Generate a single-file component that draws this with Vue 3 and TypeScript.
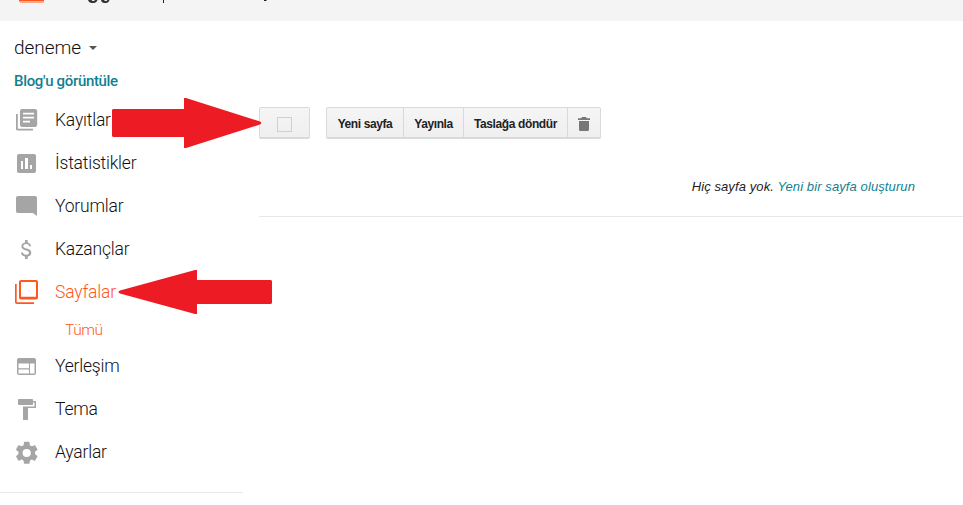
<script setup lang="ts">
interface NavItem {
  label: string
  key: string
  path: string
  active?: boolean
  child?: string
}

const items: NavItem[] = [
  {
    label: 'Kayıtlar',
    key: 'posts',
    path: 'M2.8 6H1v14.700c0 1.100.8 1.800 1.800 1.800H18v-1.700H2.800zM20.200 1H7.100C5.700 1 5 2 5 3.200v13.600C5 18 5.700 19 7.100 19h13.100c1.200 0 2-1 2-2.200V3.200C22.200 2 21.400 1 20.200 1zM19 6.500H8v-1.800h11zM15 14.500H8v-1.800h7zM19 10.500H8V8.700h11z',
  },
  {
    label: 'İstatistikler',
    key: 'stats',
    path: 'M19 3H4C2.800 3 2 3.800 2 5v15c0 1.200.8 2 2 2h15c1.200 0 2-.8 2-2V5c0-1.200-.8-2-2-2zM8 18H6v-8h2zM13 18h-3V7h3zM17 18h-2v-4h2z',
  },
  {
    label: 'Yorumlar',
    key: 'comments',
    path: 'M3 2h17c1.300 0 2 .8 2 2v18l-4-3H3c-1.300 0-2-.8-2-2V4c0-1.200.7-2 2-2z',
  },
  {
    label: 'Kazançlar',
    key: 'earnings',
    path: 'M11.500 11.500c-2.400-.6-3.200-1.300-3.200-2.400 0-1.200 1-2.100 2.900-2.100 2 0 2.700.9 2.800 2.300h2c-.1-1.800-1.200-3.400-3.400-3.900V3H10v2.400c-2.100.4-3.700 1.800-3.700 3.800 0 2.400 1.900 3.500 4.700 4.200 2.500.6 3 1.500 3 2.400 0 .7-.5 1.900-2.800 1.900-2.200 0-3-.9-3.100-2.200H6c.1 2.300 1.800 3.600 4 4V22h2.700v-2.500c2.100-.4 3.600-1.600 3.600-3.700 0-2.900-2.500-3.800-4.800-4.300z',
  },
  {
    label: 'Sayfalar',
    key: 'pages',
    active: true,
    child: 'Tümü',
    path: 'M1.700 4H0v18c0 1.200.8 2 2 2h17v-1.800H1.700zM21 0H6C4.800 0 4 .8 4 2v15.500c0 1.200.8 2 2 2h15c1.200 0 2-.8 2-2V2c0-1.200-.8-2-2-2zM21 16.800H6V2h15z',
  },
  {
    label: 'Yerleşim',
    key: 'layout',
    path: 'M19 4H4C2.800 4 2 4.800 2 6v13c0 1.200.8 2 2 2h15c1.200 0 2-.8 2-2V6c0-1.200-.8-2-2-2zM14 19.500H3.500v-4H14zM14 14.300H3.500V9.500H14zM19.500 19.500H15v-10h4.500z',
  },
  {
    label: 'Tema',
    key: 'theme',
    path: 'M18 4V3c0-.6-.4-1-1-1H4c-.6 0-1 .4-1 1v4c0 .6.4 1 1 1h13c.6 0 1-.4 1-1V5.500h1.500V9.500H8V22.500c0 .3.2.5.500.5h4c.3 0 .5-.2.500-.5V11h8V4z',
  },
  {
    label: 'Ayarlar',
    key: 'settings',
    path: 'M20 14.100c.1-.4.1-.8.1-1.100s0-.8-.1-1.200l2.300-1.800c.2-.2.300-.5.100-.7l-2.200-3.800c-.1-.3-.4-.3-.7-.3l-2.700 1.100c-.6-.4-1.200-.8-1.900-1.100L14.500 2.300c0-.3-.3-.5-.5-.5H9.500c-.3 0-.5.2-.5.500l-.4 2.900c-.7.3-1.300.7-1.900 1.100L4 5.200c-.3 0-.6 0-.7.3L1.100 9.300c-.1.200-.1.500.1.700l2.300 1.800c-.1.400-.1.800-.1 1.200s0 .7.100 1.100l-2.300 1.800c-.2.200-.2.500-.1.700l2.200 3.800c.1.300.4.300.7.300l2.700-1.100c.6.4 1.200.8 1.900 1.100l.4 2.600c0 .3.2.5.500.5H14c.3 0 .5-.2.500-.5l.4-2.600c.7-.3 1.300-.7 1.900-1.100l2.700 1.100c.3 0 .6 0 .7-.3l2.200-3.800c.1-.2.1-.5-.1-.7zM11.700 17.100a4.100 4.100 0 1 1 0-8.200 4.100 4.100 0 0 1 0 8.200z',
  },
]

const actions: string[] = ['Yeni sayfa', 'Yayınla', 'Taslağa döndür']
</script>

<template>
  <div class="page">
    <header class="topbar">
      <svg width="290" height="21" viewBox="0 0 290 21">
        <rect x="19" y="0" width="25" height="1.500" fill="#ff5722" />
        <rect x="20" y="1.500" width="24" height="1.500" fill="#ffab91" />
        <path d="M88 0h3.500l1 1h1.500l1-1h2.500q-1 3-4 3h-1.500q-3 0-4-3zM101 0h3l1 1h1.500l1-1h2q-1 3-3.500 3h-1.500q-3 0-3.500-3z" fill="#333" />
        <path d="M163 0h1v3h-1z" fill="#222" />
        <path d="M264 0h3l-1 1h-2z" fill="#222" />
      </svg>
    </header>
    <div class="body">
      <aside class="sidebar">
        <div class="blog"><span class="blog-name">deneme</span><i class="caret"></i></div>
        <a class="view">Blog'u görüntüle</a>
        <nav>
          <template v-for="item in items" :key="item.key">
            <a class="item" :class="{ active: item.active }">
              <svg class="icon" width="24" height="24" viewBox="0 0 24 24">
                <path :d="item.path" fill="currentColor" fill-rule="evenodd" />
              </svg>
              <span class="label">{{ item.label }}</span>
            </a>
            <a v-if="item.child" class="child">{{ item.child }}</a>
          </template>
        </nav>
      </aside>
      <main class="content">
        <div class="toolbar">
          <button class="btn check"><span class="box"></span></button>
          <div class="group">
            <button v-for="(a, i) in actions" :key="a" class="btn" :class="'b' + i">{{ a }}</button>
            <button class="btn trash">
              <svg width="12" height="14" viewBox="0 0 12 14"><path d="M0 1.200h3.200L4 0h4l.8 1.200H12V3H0zM1 4h10v8.500c0 .9-.6 1.500-1.500 1.500h-7C1.600 14 1 13.400 1 12.500z" fill="#777" /></svg>
            </button>
          </div>
        </div>
        <p class="empty">Hiç sayfa yok. <a>Yeni bir sayfa oluşturun</a></p>
      </main>
    </div>
    <svg class="arrow first" width="150" height="51" viewBox="0 0 150 51">
      <path d="M1 11H72V0H74L148 23.500Q150.500 25 148 26.500L74 50H72V39H1L0 38V12z" fill="#ed1c24" />
    </svg>
    <svg class="arrow second" width="154" height="44" viewBox="0 0 154 44">
      <path d="M153 10H79V0H77L2 20.500Q-1 22 2 23.500L77 44H79V34H153L154 33V11z" fill="#ed1c24" />
    </svg>
  </div>
</template>

<style>
body { background: #fff; overflow: hidden; }
</style>

<style scoped>
.page { position: relative; height: 505px; overflow: hidden; font-family: Roboto, sans-serif; color: #222; }
.topbar { height: 21px; background: #f4f4f4; }
.topbar svg { display: block; }
.body { display: flex; }
.sidebar { box-sizing: border-box; width: 243px; height: 472px; border-bottom: 1px solid #e8e8e8; padding-top: 14px; }
.blog { display: flex; align-items: center; height: 24px; padding-left: 14px; font-size: 19px; font-weight: 300; color: #111; }
.blog-name { width: 67px; letter-spacing: -0.05px; white-space: nowrap; }
.caret { margin: 2px 0 0 8px; border: 4px solid transparent; border-top-color: #555; border-bottom: 0; }
.view { display: block; margin: 12px 0 0 14px; height: 20px; font-size: 15px; font-weight: 500; line-height: 20px; color: #128091; white-space: nowrap; letter-spacing: -0.33px; }
nav { padding-top: 7px; }
.item { display: flex; align-items: center; height: 43px; color: #111; }
.icon { flex: none; margin-left: 15px; color: #a5a5a5; }
.label { margin-left: 16px; font-size: 17.5px; font-weight: 300; white-space: nowrap; letter-spacing: -0.2px; }
.active, .active .icon { color: #ff5722; }
.child { display: block; box-sizing: border-box; height: 31px; padding: 3px 0 0 65px; line-height: 28px; font-size: 15.5px; font-weight: 300; letter-spacing: -0.4px; color: #ff5722; }
.content { flex: 1; margin-left: 16px; }
.toolbar { display: flex; gap: 16px; padding-top: 86px; }
.btn { box-sizing: border-box; height: 32px; padding: 3px 0 0; margin: 0; border: 1px solid #d9d9d9; border-bottom-width: 2px; background: linear-gradient(#f5f5f5, #efefef); color: #222; font: bold 12px "Liberation Sans", Arial, sans-serif; letter-spacing: -0.4px; white-space: nowrap; display: flex; align-items: center; justify-content: center; }
.check { width: 51px; border-radius: 2px; }
.box { box-sizing: border-box; width: 15px; height: 15px; border: 1px solid #d0d0d0; }
.group { display: flex; }
.group .btn + .btn { border-left: 0; }
.b0 { width: 78px; border-radius: 2px 0 0 2px; }
.b1 { width: 60px; }
.b2 { width: 104px; letter-spacing: -0.38px; }
.group .trash { width: 33px; padding-top: 3px; border-radius: 0 2px 2px 0; }
.empty { box-sizing: border-box; height: 78px; margin: 0; padding: 39px 48px 0 0; border-bottom: 1px solid #e8e8e8; text-align: right; font: italic 13px/18px "Liberation Sans", Arial, sans-serif; letter-spacing: 0.1px; color: #222; }
.empty a { color: #128091; }
.arrow { position: absolute; }
.first { left: 112px; top: 98px; }
.second { left: 118px; top: 270px; }
</style>
